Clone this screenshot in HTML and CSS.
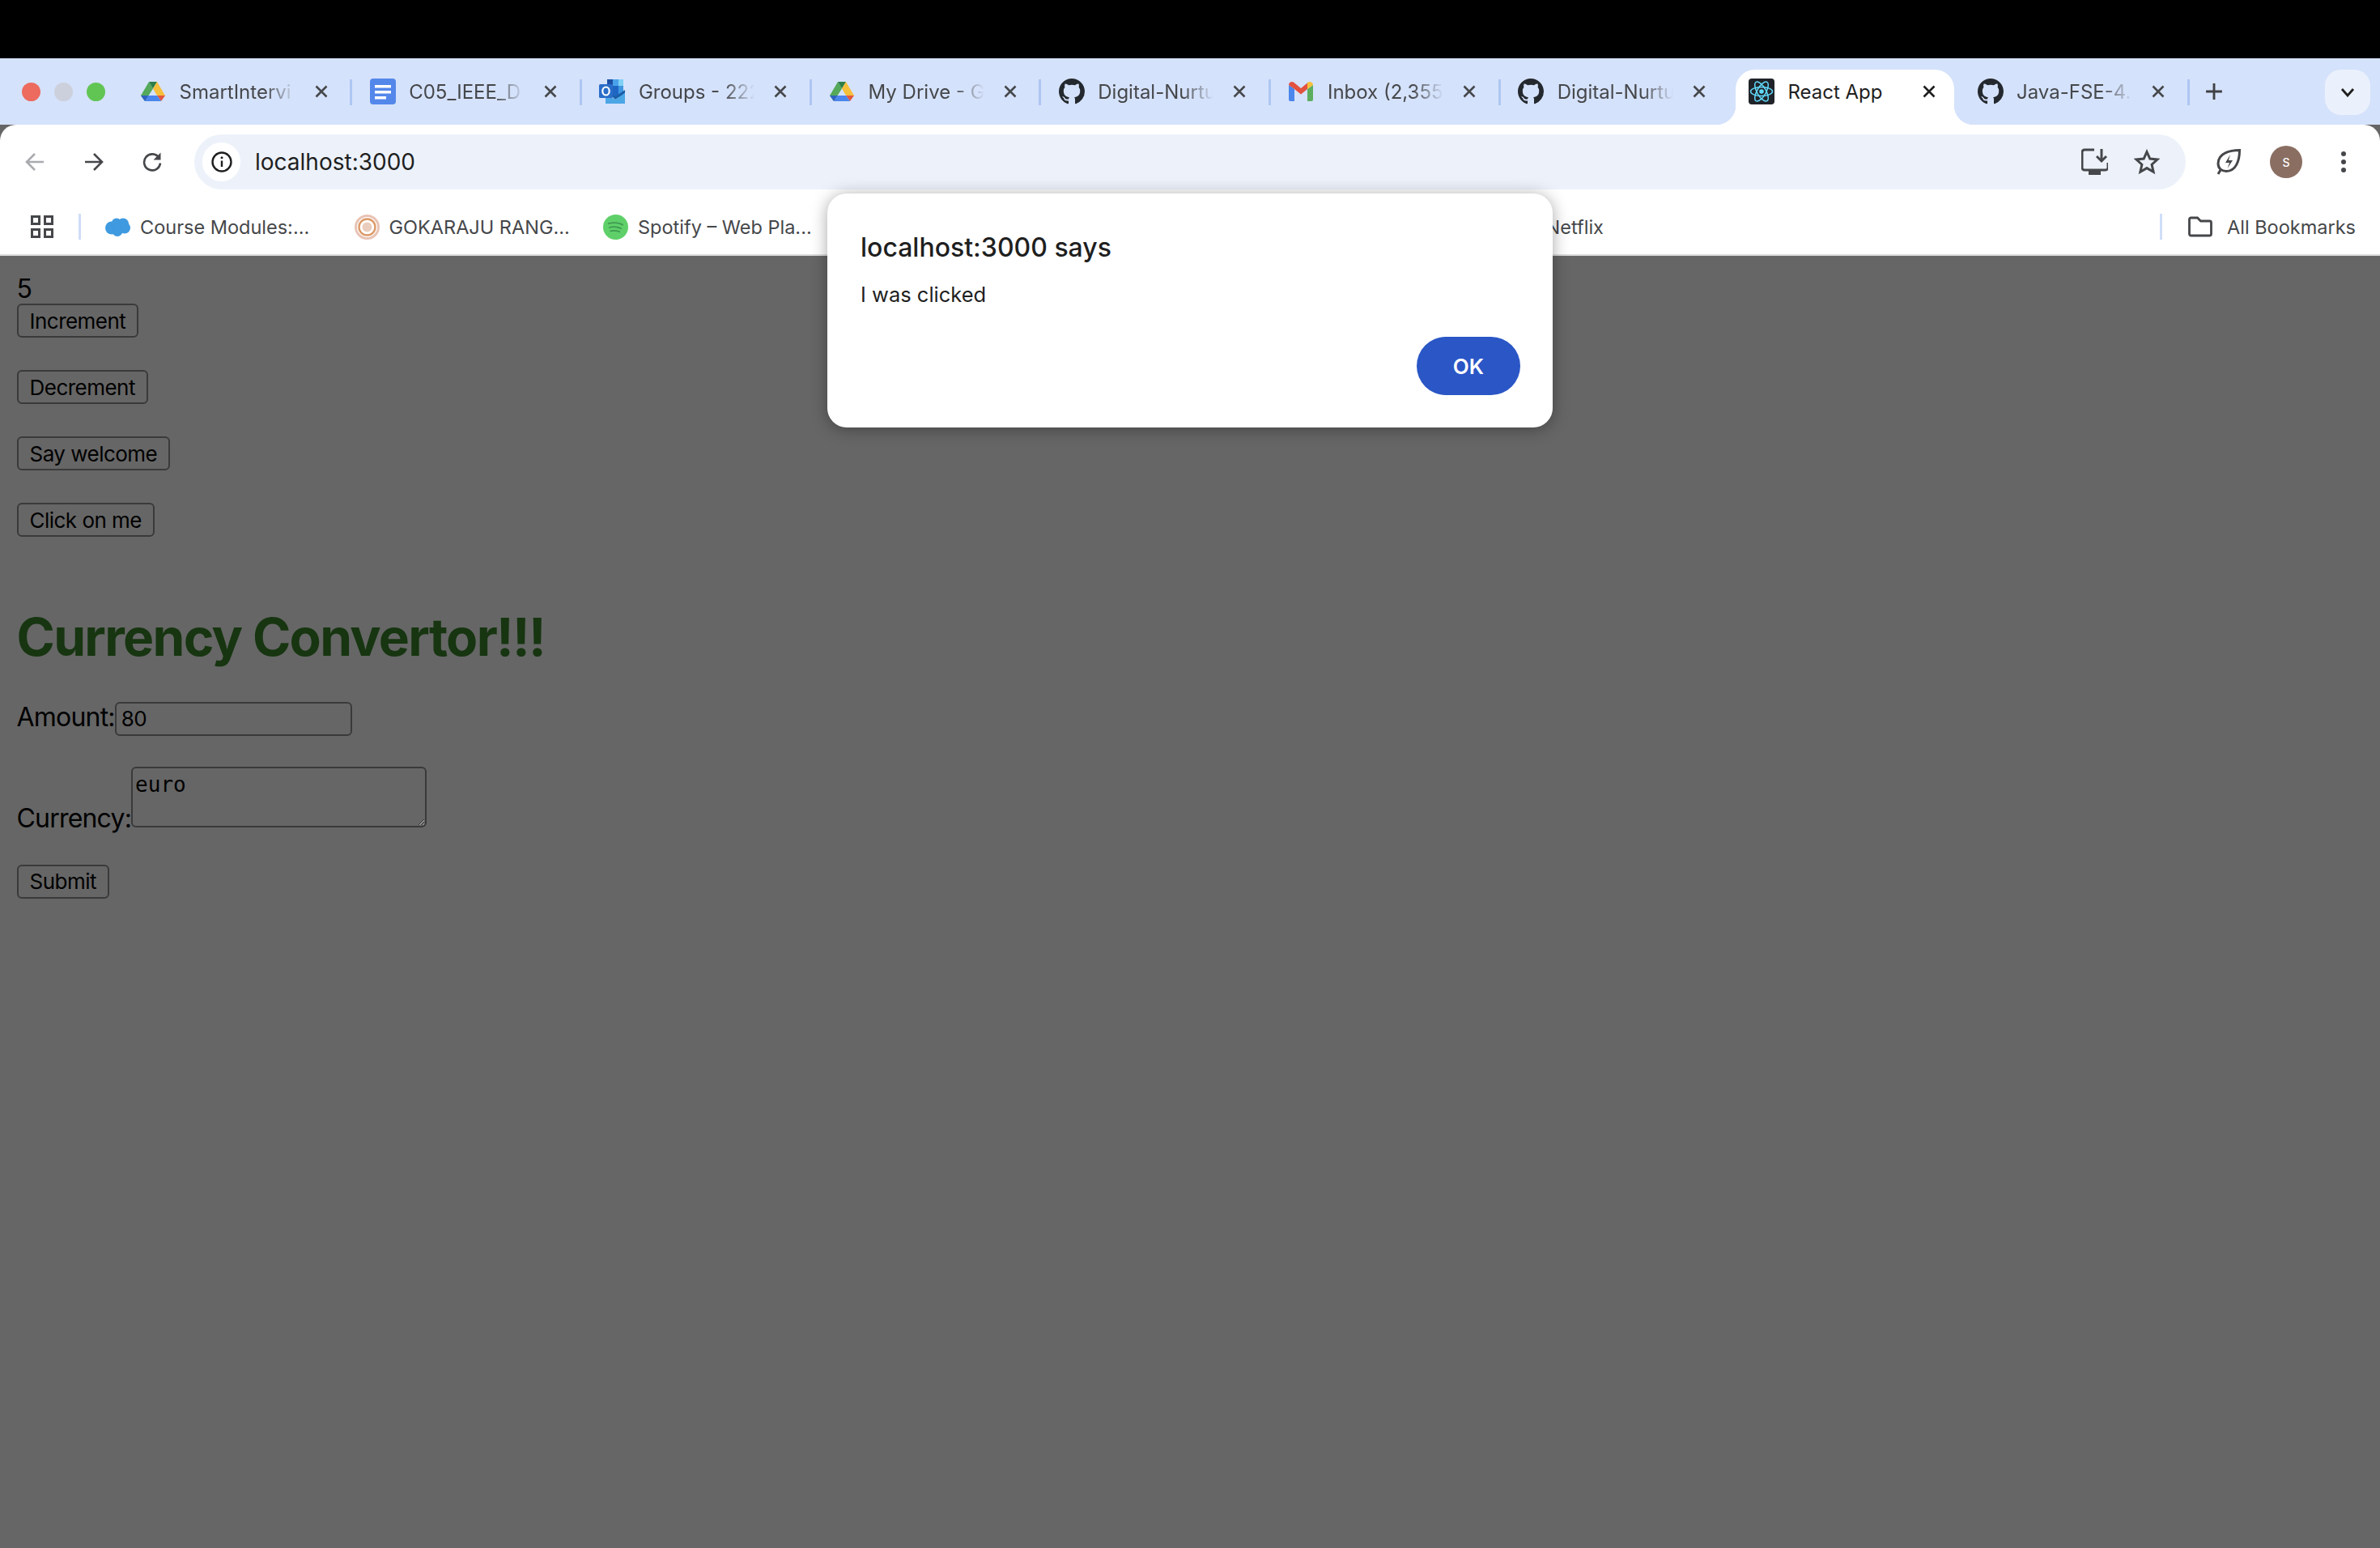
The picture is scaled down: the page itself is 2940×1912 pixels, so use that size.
FILE: index.html
```html
<!DOCTYPE html>
<html>
<head>
	<title>React App</title>
	<link rel="stylesheet" href="styles.css">
</head>
<body>
	<svg class="sprites" width="0" height="0">
		<symbol id="i-drive" viewBox="0 0 30 26">
			<path fill="#54a95a" d="M10 1l5 8.500L5 25l-5-7z"/>
			<path fill="#2d7d46" d="M10 1h10l-5 8.500z"/>
			<path fill="#f6bf3c" d="M20 1l10 17H20l-5-8.500z"/>
			<path fill="#e2573f" d="M30 18l-5 7-5-7z"/>
			<path fill="#4a86ec" d="M5 25l4.500-7H20l5 7z"/>
			<path fill="#2f62c4" d="M0 18h9.500L5 25z"/>
		</symbol>
		<symbol id="i-docs" viewBox="0 0 32 32">
			<rect width="32" height="32" rx="4" fill="#5487ea"/>
			<path fill="#fff" d="M6 8h20v3.500H6zM6 15h20v3.500H6zM6 22h14v3.500H6z"/>
		</symbol>
		<symbol id="i-outlook" viewBox="0 0 32 30">
			<path fill="#1c4fa6" d="M10 0h20v7H10z"/>
			<path fill="#2d7fd8" d="M10 7h7v15h-7z"/>
			<path fill="#4aa3ea" d="M17 0h7v8h-7z"/>
			<path fill="#1f66c4" d="M17 8h7v14h-7z"/>
			<path fill="#7fd0f5" d="M24 0h6v8h-6z"/>
			<path fill="#3f97e0" d="M24 8h6v14h-6z"/>
			<path fill="#1a5fa8" d="M8 13l12 8 12-8v4L20 25z"/>
			<path fill="#4ba6e6" d="M8 17l12 8 12-8v13H8z"/>
			<rect y="6" width="17" height="17" rx="1.500" fill="#2a6dc8"/>
			<ellipse cx="8.500" cy="14.500" rx="4.200" ry="5" fill="none" stroke="#fff" stroke-width="2.200"/>
		</symbol>
		<symbol id="i-github" viewBox="0 0 16 16">
			<path fill="#24292f" d="M8 0C3.580 0 0 3.580 0 8c0 3.540 2.290 6.530 5.470 7.590.4.070.55-.17.55-.38 0-.19-.01-.82-.01-1.490-2.010.37-2.530-.49-2.690-.94-.09-.23-.48-.94-.82-1.130-.28-.15-.68-.52-.01-.53.63-.01 1.080.58 1.230.82.72 1.210 1.870.87 2.330.66.070-.52.28-.87.51-1.070-1.780-.2-3.640-.89-3.640-3.950 0-.87.31-1.590.82-2.150-.08-.2-.36-1.020.08-2.120 0 0 .67-.21 2.200.82.64-.18 1.320-.27 2-.27.68 0 1.360.09 2 .27 1.530-1.040 2.200-.82 2.200-.82.44 1.100.16 1.920.08 2.120.51.56.82 1.270.82 2.150 0 3.070-1.870 3.750-3.650 3.950.29.25.54.73.54 1.480 0 1.070-.01 1.930-.01 2.200 0 .21.15.46.55.38A8.013 8.013 0 0016 8c0-4.420-3.580-8-8-8z"/>
		</symbol>
		<symbol id="i-gmail" viewBox="0 0 30 24">
			<path fill="#4a86ec" d="M0 4v18a2 2 0 002 2h5V9z"/>
			<path fill="#5cae5f" d="M30 4v18a2 2 0 01-2 2h-5V9z"/>
			<path fill="#e2523f" d="M0 4c0-3.500 4-5 6.500-3L15 8l8.500-7L23 9l-8 6.500L7 9 0 4z"/>
			<path fill="#f6bf3c" d="M23 9V1c2.500-2 7-.5 7 3z"/>
		</symbol>
		<symbol id="i-react" viewBox="0 0 32 32">
			<rect width="32" height="32" rx="4" fill="#20232a"/>
			<g fill="none" stroke="#61dafb" stroke-width="1.500">
				<ellipse cx="16" cy="16" rx="13.500" ry="5.500"/>
				<ellipse cx="16" cy="16" rx="13.500" ry="5.500" transform="rotate(60 16 16)"/>
				<ellipse cx="16" cy="16" rx="13.500" ry="5.500" transform="rotate(120 16 16)"/>
			</g>
			<circle cx="16" cy="16" r="2.800" fill="#61dafb"/>
		</symbol>
		<symbol id="i-close" viewBox="0 0 16 16">
			<path d="M1.500 1.500l13 13M14.500 1.500l-13 13" fill="none" stroke="currentColor" stroke-width="2.600"/>
		</symbol>
	</svg>

	<div class="black-bar"></div>

	<div class="tab-strip">
		<div class="traffic">
			<span class="light red"></span>
			<span class="light grey"></span>
			<span class="light green"></span>
		</div>

		<div class="tab">
			<svg class="tab-icon drive"><use href="#i-drive"/></svg>
			<span class="tab-title">SmartIntervi</span>
			<svg class="tab-close"><use href="#i-close"/></svg>
		</div>
		<span class="tab-sep"></span>
		<div class="tab">
			<svg class="tab-icon"><use href="#i-docs"/></svg>
			<span class="tab-title">C05_IEEE_D</span>
			<svg class="tab-close"><use href="#i-close"/></svg>
		</div>
		<span class="tab-sep"></span>
		<div class="tab">
			<svg class="tab-icon"><use href="#i-outlook"/></svg>
			<span class="tab-title">Groups - 222</span>
			<svg class="tab-close"><use href="#i-close"/></svg>
		</div>
		<span class="tab-sep"></span>
		<div class="tab">
			<svg class="tab-icon drive"><use href="#i-drive"/></svg>
			<span class="tab-title">My Drive - G</span>
			<svg class="tab-close"><use href="#i-close"/></svg>
		</div>
		<span class="tab-sep"></span>
		<div class="tab">
			<svg class="tab-icon"><use href="#i-github"/></svg>
			<span class="tab-title">Digital-Nurtu</span>
			<svg class="tab-close"><use href="#i-close"/></svg>
		</div>
		<span class="tab-sep"></span>
		<div class="tab">
			<svg class="tab-icon gmail"><use href="#i-gmail"/></svg>
			<span class="tab-title">Inbox (2,355</span>
			<svg class="tab-close"><use href="#i-close"/></svg>
		</div>
		<span class="tab-sep"></span>
		<div class="tab">
			<svg class="tab-icon"><use href="#i-github"/></svg>
			<span class="tab-title">Digital-Nurtu</span>
			<svg class="tab-close"><use href="#i-close"/></svg>
		</div>
		<span class="tab-sep off"></span>
		<div class="tab active">
			<svg class="tab-icon"><use href="#i-react"/></svg>
			<span class="tab-title">React App</span>
			<svg class="tab-close"><use href="#i-close"/></svg>
		</div>
		<div class="tab">
			<svg class="tab-icon"><use href="#i-github"/></svg>
			<span class="tab-title">Java-FSE-4.</span>
			<svg class="tab-close"><use href="#i-close"/></svg>
		</div>
		<span class="tab-sep"></span>

		<svg class="new-tab" viewBox="0 0 20 20"><path d="M10 1v18M1 10h18" fill="none" stroke="#3f4145" stroke-width="2.600"/></svg>
		<div class="tab-search">
			<svg class="chevron" viewBox="0 0 18 12"><path d="M2 2l7 8 7-8" fill="none" stroke="#1f1f1f" stroke-width="2.800"/></svg>
		</div>
	</div>

	<div class="toolbar">
		<div class="nav-btn">
			<svg viewBox="0 0 26 26"><path d="M24 13H3M13 3L3 13l10 10" fill="none" stroke="#a9abae" stroke-width="2.600"/></svg>
		</div>
		<div class="nav-btn">
			<svg viewBox="0 0 26 26"><path d="M2 13h21M13 3l10 10-10 10" fill="none" stroke="#45474a" stroke-width="2.600"/></svg>
		</div>
		<div class="nav-btn">
			<svg viewBox="0 0 26 26"><path d="M21.500 8A10 10 0 1 0 23 14.500" fill="none" stroke="#45474a" stroke-width="2.600"/><path d="M23.500 1.500v9h-9z" fill="#45474a"/></svg>
		</div>

		<div class="address-bar">
			<div class="site-info">
				<svg viewBox="0 0 26 26"><circle cx="13" cy="13" r="11.500" fill="none" stroke="#1f1f1f" stroke-width="2.400"/><path d="M13 11.500v7.500" stroke="#1f1f1f" stroke-width="2.400"/><circle cx="13" cy="7.800" r="1.500" fill="#1f1f1f"/></svg>
			</div>
			<span class="url">localhost:3000</span>
			<div class="address-actions">
				<svg class="save" viewBox="0 0 33 34"><path d="M16 2H4a3 3 0 00-3 3v19a3 3 0 003 3h26a3 3 0 003-3v-6" fill="none" stroke="#45474a" stroke-width="3"/><path d="M9 27h15v6H9z" fill="#45474a"/><path d="M25 1v14M19 10l6 6 6-6" fill="none" stroke="#45474a" stroke-width="3"/></svg>
				<svg class="star" viewBox="0 0 32 32"><path d="M16 3.500l3.800 8.500 9.200 1-6.900 6.200 2 9.100-8.100-4.700-8.100 4.700 2-9.100L3 13l9.200-1z" fill="none" stroke="#45474a" stroke-width="3"/></svg>
			</div>
		</div>

		<div class="toolbar-actions">
			<svg class="leaf" viewBox="0 0 32 34"><path d="M29.500 2.500C18 2.500 3 6 3 19c0 6 4.500 9.500 10 9.500 12 0 16.500-13 16.500-26z" fill="none" stroke="#45474a" stroke-width="3"/><path d="M18 8l-6 10h5l-2.500 7 6.500-10h-5z" fill="#45474a"/><path d="M6 27l-3 5" stroke="#45474a" stroke-width="3"/></svg>
			<div class="avatar">S</div>
			<div class="menu-dots"><span></span><span></span><span></span></div>
		</div>
	</div>

	<div class="bookmarks">
		<svg class="apps" viewBox="0 0 28 28"><path d="M1.500 1.500h9v9h-9zM17.500 1.500h9v9h-9zM1.500 17.500h9v9h-9zM17.500 17.500h9v9h-9z" fill="none" stroke="#45474a" stroke-width="3"/></svg>
		<span class="bm-sep"></span>
		<div class="bm">
			<svg class="bm-icon" viewBox="0 0 31 24"><g fill="#3f9ae0"><circle cx="8" cy="13" r="8"/><circle cx="14" cy="7" r="6"/><circle cx="22" cy="8" r="7"/><circle cx="24" cy="13" r="7"/><circle cx="15" cy="17" r="6.500"/></g></svg>
			<span>Course Modules:...</span>
		</div>
		<div class="bm">
			<svg class="bm-icon" viewBox="0 0 31 31"><circle cx="15.500" cy="15.500" r="14" fill="none" stroke="#e8c3b5" stroke-width="3"/><circle cx="15.500" cy="15.500" r="10" fill="none" stroke="#dd9a68" stroke-width="2.400"/><circle cx="15.500" cy="15.500" r="6" fill="#eacdbd"/></svg>
			<span>GOKARAJU RANG...</span>
		</div>
		<div class="bm">
			<svg class="bm-icon" viewBox="0 0 32 32"><circle cx="16" cy="16" r="16" fill="#5fd069"/><path d="M7 11.500c6-1.800 12.500-1.200 18 1.500M8 16.500c5-1.400 10.500-.9 15 1.400M9.500 21c4-1 8-.6 11.500 1" fill="none" stroke="#3f9a52" stroke-width="1.800" stroke-linecap="round"/></svg>
			<span>Spotify – Web Pla...</span>
		</div>
		<span class="bm-netflix">Netflix</span>
		<span class="bm-sep last"></span>
		<svg class="folder" viewBox="0 0 30 26"><path d="M1.500 4a2 2 0 012-2h8l4 4h11a2 2 0 012 2v14a2 2 0 01-2 2h-23a2 2 0 01-2-2z" fill="none" stroke="#45474a" stroke-width="2.800"/></svg>
		<span class="bm-all">All Bookmarks</span>
	</div>

	<div class="page">
		<div class="count">5</div>
		<div class="btn-row"><button>Increment</button></div>
		<div class="btn-row"><button>Decrement</button></div>
		<div class="btn-row"><button>Say welcome</button></div>
		<div class="btn-row"><button>Click on me</button></div>

		<h1>Currency Convertor!!!</h1>
		<form>
			<div class="field amount">
				<label>Amount:</label><input type="text" value="80">
			</div>
			<div class="field currency">
				<label>Currency:</label><textarea>euro</textarea>
			</div>
			<button type="button">Submit</button>
		</form>
	</div>

	<div class="alert">
		<div class="alert-title">localhost:3000 says</div>
		<div class="alert-text">I was clicked</div>
		<div class="alert-actions"><div class="alert-ok">OK</div></div>
	</div>
</body>
</html>
```

FILE: styles.css
```css
* {
	box-sizing: border-box;
}

html, body {
	height: 100%;
}

body {
	margin: 0;
	display: flex;
	flex-direction: column;
	overflow: hidden;
	font-family: Inter, "Noto Sans", sans-serif;
	background-color: #666;
}

.sprites {
	display: none;
}

.black-bar {
	height: 72px;
	background-color: #000;
}

/* tabs */
.tab-strip {
	height: 82px;
	padding-top: 14px;
	display: flex;
	background-color: #d5e2fb;
}

.traffic {
	width: 151.5px;
	height: 54px;
	padding-left: 26.5px;
	display: flex;
	align-items: center;
	gap: 17px;
}

.light {
	width: 23px;
	height: 23px;
	border-radius: 50%;
}

.light.red { background-color: #ec6a5e; }
.light.grey { background-color: #ccd0dc; }
.light.green { background-color: #61c554; }

.tab {
	position: relative;
	width: 280.7px;
	height: 54px;
	padding-left: 21.5px;
	display: flex;
	align-items: center;
	color: #45474a;
	font-size: 24px;
	flex-shrink: 0;
}

.tab.active {
	width: 270px;
	height: 68px;
	margin: 0 7.1px 0 6.6px;
	padding-left: 16px;
	padding-bottom: 14px;
	background-color: #fff;
	color: #1f1f1f;
	border-radius: 24px 24px 0 0;
}

.tab.active::before,
.tab.active::after {
	content: "";
	position: absolute;
	bottom: 0;
	width: 24px;
	height: 24px;
}

.tab.active::before {
	left: -24px;
	background: radial-gradient(circle at 0 0, transparent 24px, #fff 24.5px);
}

.tab.active::after {
	right: -24px;
	background: radial-gradient(circle at 100% 0, transparent 24px, #fff 24.5px);
}

.tab-icon {
	width: 32px;
	height: 32px;
	margin-right: 16.500px;
	flex-shrink: 0;
}

.tab-icon.drive {
	height: 26px;
}

.tab-icon.gmail {
	height: 24px;
}

.tab-title {
	width: 154px;
	overflow: hidden;
	white-space: nowrap;
	-webkit-mask-image: linear-gradient(to right, #000 105px, transparent 143px);
	mask-image: linear-gradient(to right, #000 105px, transparent 143px);
}

.tab.active .tab-title {
	-webkit-mask-image: none;
	mask-image: none;
}

.tab-close {
	width: 16px;
	height: 16px;
	margin-left: 13px;
	flex-shrink: 0;
}

.tab-sep {
	width: 3px;
	height: 32px;
	margin-top: 12px;
	background-color: #aec6f2;
	flex-shrink: 0;
}

.tab-sep.off {
	background-color: transparent;
}

.new-tab {
	width: 22px;
	height: 22px;
	margin: 16px 0 0 19px;
}

.tab-search {
	width: 56px;
	height: 56px;
	margin-left: auto;
	margin-right: 12px;
	display: flex;
	align-items: center;
	justify-content: center;
	background-color: #ebf1fc;
	border-radius: 20px;
}

.chevron {
	width: 18px;
	height: 12px;
}

/* address row */
.toolbar {
	height: 86px;
	padding: 12px 0 6px 7px;
	display: flex;
	background-color: #fff;
	border-radius: 20px 20px 0 0;
}

.nav-btn {
	width: 72.500px;
	display: flex;
	align-items: center;
	justify-content: center;
}

.nav-btn svg {
	width: 26px;
	height: 26px;
}

.address-bar {
	width: 2460px;
	margin-left: 15.500px;
	padding: 0 32px 0 10px;
	display: flex;
	align-items: center;
	background-color: #edf2fa;
	border-radius: 34px;
}

.site-info {
	width: 47px;
	height: 48px;
	display: flex;
	align-items: center;
	justify-content: center;
	background-color: #fff;
	border-radius: 24px;
}

.site-info svg {
	width: 26px;
	height: 26px;
}

.url {
	margin-left: 18px;
	font-size: 28px;
	color: #1f1f1f;
}

.address-actions {
	margin-left: auto;
	display: flex;
	align-items: center;
	gap: 32px;
}

.save {
	width: 33px;
	height: 34px;
}

.star {
	width: 32px;
	height: 32px;
}

.toolbar-actions {
	margin-left: 37px;
	display: flex;
	align-items: center;
}

.leaf {
	width: 32px;
	height: 34px;
}

.avatar {
	width: 40px;
	height: 40px;
	margin-left: 35px;
	display: flex;
	align-items: center;
	justify-content: center;
	border-radius: 50%;
	background-color: #8a6e62;
	color: #fff;
	font-size: 14px;
	font-weight: 500;
}

.menu-dots {
	margin-left: 48px;
	height: 26px;
	display: flex;
	flex-direction: column;
	justify-content: space-between;
}

.menu-dots span {
	width: 6px;
	height: 6px;
	border-radius: 50%;
	background-color: #45474a;
}

/* bookmarks */
.bookmarks {
	height: 76px;
	padding: 6px 30px 0 38px;
	display: flex;
	align-items: center;
	background-color: #fff;
	border-bottom: 2px solid #dcdcdc;
	font-size: 23.5px;
	color: #45474a;
}

.apps {
	width: 28px;
	height: 28px;
}

.bm-sep {
	width: 3px;
	height: 32px;
	margin: 0 30px 0 31px;
	background-color: #cfddf7;
}

.bm {
	width: 307.5px;
	display: flex;
	align-items: center;
	gap: 12px;
	white-space: nowrap;
}

.bm-icon {
	width: 31px;
	height: 31px;
	flex-shrink: 0;
}

.bm-netflix {
	margin-left: 857px;
}

.bm-sep.last {
	margin: 0 32px 0 auto;
}

.folder {
	width: 30px;
	height: 26px;
	margin-right: 18px;
}

/* the page behind the dialog, dimmed */
.page {
	flex: 1;
	padding: 21px 0 0 20.500px;
	font-family: Inter, "Liberation Sans", sans-serif;
	font-size: 32px;
	letter-spacing: -0.025em;
	color: #000;
}

.count {
	height: 38px;
}

.btn-row {
	height: 82px;
}

.page button {
	height: 42px;
	padding: 0 14px;
	font-family: Inter, "Liberation Sans", sans-serif;
	font-size: 26px;
	letter-spacing: -0.02em;
	color: #000;
	background-color: transparent;
	border: 2px solid #3a3a3a;
	border-radius: 6px;
	vertical-align: top;
}

h1 {
	margin: 47px 0 0;
	font-size: 64px;
	line-height: 74px;
	letter-spacing: -0.026em;
	color: #163510;
}

.field {
	white-space: nowrap;
}

.amount {
	margin-top: 42px;
}

.amount input {
	width: 293px;
	height: 42px;
	padding: 0 6px;
	font-family: Inter, "Liberation Sans", sans-serif;
	font-size: 26px;
	letter-spacing: -0.02em;
	color: #000;
	background-color: transparent;
	border: 2px solid #3a3a3a;
	border-radius: 6px;
}

.currency {
	margin-top: 38px;
}

.currency textarea {
	width: 365px;
	height: 75px;
	padding: 5px 3px;
	font-family: "DejaVu Sans Mono", "Liberation Mono", monospace;
	font-size: 26px;
	letter-spacing: 0;
	color: #000;
	background-color: transparent;
	border: 2px solid #3a3a3a;
	border-radius: 6px;
}

form button {
	margin-top: 38px;
}

/* alert box */
.alert {
	position: absolute;
	left: 1022px;
	top: 239px;
	width: 896px;
	height: 289px;
	padding: 48px 40px 40px 41px;
	display: flex;
	flex-direction: column;
	background-color: #fff;
	border-radius: 24px;
	box-shadow: 0 2px 20px rgba(0, 0, 0, 0.35);
	color: #1f1f1f;
}

.alert-title {
	font-size: 32px;
	font-weight: 500;
	line-height: 38px;
}

.alert-text {
	margin-top: 22px;
	font-size: 25.5px;
	line-height: 34px;
}

.alert-actions {
	margin-top: auto;
	display: flex;
	justify-content: flex-end;
}

.alert-ok {
	width: 128px;
	height: 72px;
	display: flex;
	align-items: center;
	justify-content: center;
	background-color: #2a56c6;
	border-radius: 36px;
	color: #fff;
	font-size: 26px;
	font-weight: 600;
}
```
